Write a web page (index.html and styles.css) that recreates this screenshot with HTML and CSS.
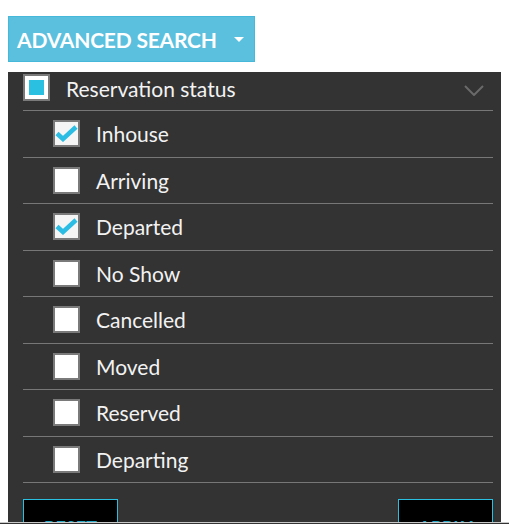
FILE: index.html
```html
<!DOCTYPE html>
<html lang="en">
<head>
    <meta name="viewport" content="width=device-width, initial-scale=1.0" charset="UTF-8">
    <title>Advanced search</title>
    <link rel="stylesheet" href="styles.css">
</head>
<body>
    <button class="search-toggle">ADVANCED SEARCH <span class="caret"></span></button>

    <div class="filter-panel">
        <!-- group header -->
        <div class="group-head">
            <span class="box partial"><span class="fill"></span></span>
            <span class="group-title">Reservation status</span>
            <svg class="chevron" width="20" height="11" viewBox="0 0 20 11">
                <path d="M1 1 L10 10 L19 1" fill="none" stroke="#6a6a6a" stroke-width="2"/>
            </svg>
        </div>

        <div class="status-row">
            <span class="box checked">
                <svg width="23" height="17" viewBox="0 0 23 17"><path d="M2 8.5 L8 14 L21 2" fill="none" stroke="#2bbde3" stroke-width="4.5"/></svg>
            </span>
            <span class="label">Inhouse</span>
        </div>
        <div class="status-row">
            <span class="box"></span>
            <span class="label">Arriving</span>
        </div>
        <div class="status-row">
            <span class="box checked">
                <svg width="23" height="17" viewBox="0 0 23 17"><path d="M2 8.5 L8 14 L21 2" fill="none" stroke="#2bbde3" stroke-width="4.5"/></svg>
            </span>
            <span class="label">Departed</span>
        </div>
        <div class="status-row">
            <span class="box"></span>
            <span class="label">No Show</span>
        </div>
        <div class="status-row">
            <span class="box"></span>
            <span class="label">Cancelled</span>
        </div>
        <div class="status-row">
            <span class="box"></span>
            <span class="label">Moved</span>
        </div>
        <div class="status-row">
            <span class="box"></span>
            <span class="label">Reserved</span>
        </div>
        <div class="status-row">
            <span class="box"></span>
            <span class="label">Departing</span>
        </div>

        <div class="panel-actions">
            <button class="action">RESET</button>
            <button class="action">APPLY</button>
        </div>
    </div>

    <div class="bottom-bar"></div>
</body>
</html>
```

FILE: styles.css
```css
body {
    margin: 8px;
    font-family: 'Lato', 'Liberation Sans', sans-serif;
    background-color: #fff;
}

/* the blue toggle button */
.search-toggle {
    display: flex;
    align-items: center;
    margin-top: 8px;
    width: 247px;
    height: 46px;
    padding: 0 0 0 8px;
    background-color: #5bc0de;
    border: 1px solid #46b8da;
    color: #fff;
    font-family: 'Lato', 'Liberation Sans', sans-serif;
    font-weight: bold;
    font-size: 21px;
    letter-spacing: -0.2px;
    cursor: pointer;
}

.caret {
    margin-left: 17px;
    width: 0;
    height: 0;
    border-left: 5px solid transparent;
    border-right: 5px solid transparent;
    border-top: 5px solid #fff;
}

/* dark dropdown panel */
.filter-panel {
    margin-top: 10px;
    width: 470px;
    padding: 0 15px;
    background-color: #333;
    color: #f2f2f2;
    height: 460px;
    overflow: hidden;
}

.group-head {
    display: flex;
    align-items: flex-start;
    height: 39px;
    padding-top: 2px;
    box-sizing: border-box;
    border-bottom: 1px solid #777;
}

.group-title {
    margin-left: 16px;
    font-size: 21px;
    line-height: 29px;
}

.chevron {
    margin-left: auto;
    margin-right: 9px;
    margin-top: 11px;
}

.status-row {
    display: flex;
    align-items: center;
    height: 46.5px;
    padding-left: 30px;
    border-bottom: 1px solid #777;
    box-sizing: border-box;
}

.label {
    margin-left: 16px;
    font-size: 21px;
}

/* checkbox */
.box {
    display: flex;
    align-items: center;
    justify-content: center;
    width: 27px;
    height: 27px;
    box-sizing: border-box;
    border: 2px solid #7a7a7a;
    background-color: #fff;
    flex-shrink: 0;
}

.box.checked {
    background-color: #f5f5f5;
}

.box .fill {
    width: 15px;
    height: 15px;
    background-color: #29c0e2;
}

.panel-actions {
    display: flex;
    justify-content: space-between;
    margin-top: 16px;
}

.action {
    box-sizing: border-box;
    width: 95px;
    height: 40px;
    padding: 17px 0 0;
    background-color: #000;
    border: 1px solid #29c0e2;
    color: #29a9c8;
    font-family: 'Lato', 'Liberation Sans', sans-serif;
    font-weight: bold;
    font-size: 18px;
    line-height: 18px;
}

.bottom-bar {
    position: fixed;
    left: 0;
    right: 0;
    bottom: 0;
    height: 1px;
    border-top: 1px solid #c8c8c8;
    background-color: #333;
}
```
